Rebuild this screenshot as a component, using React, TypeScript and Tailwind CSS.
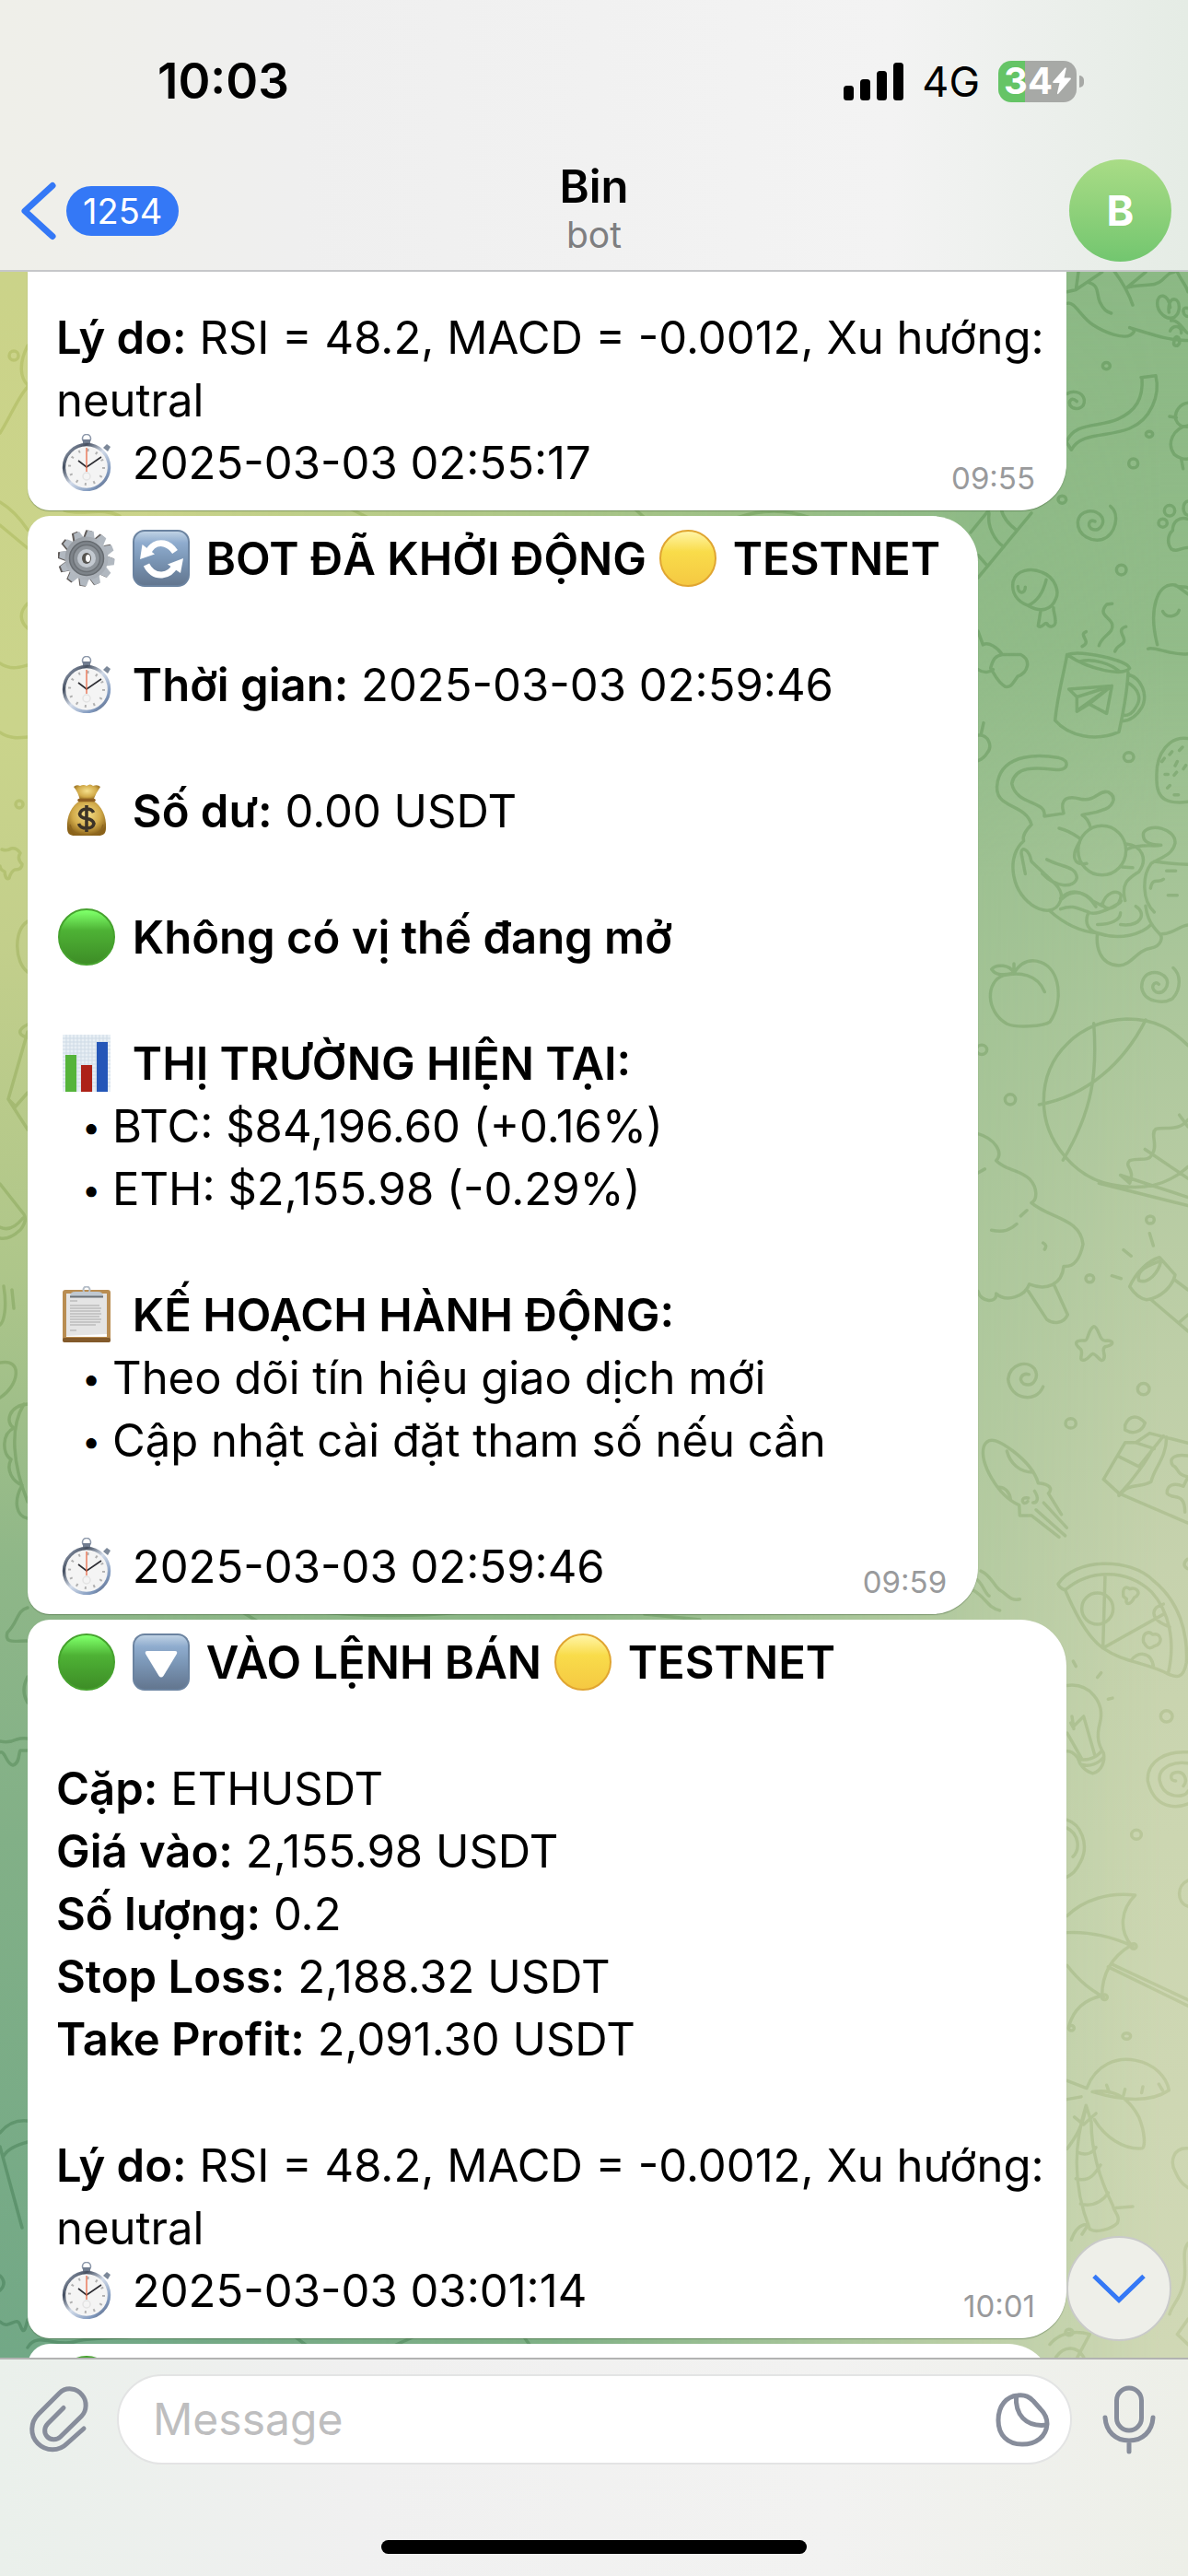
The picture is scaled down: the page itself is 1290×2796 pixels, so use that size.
import { useId, type ReactNode } from "react";

/* ---------- Emoji ---------- */

const EMOJI = "inline-block size-[62px] ml-[2px] mr-[5px] align-[-13px]";

function Ball({ tone }: { tone: "green" | "yellow" }) {
  const id = useId();
  const c =
    tone === "green"
      ? { a: "#7dff68", b: "#4eb235", d: "#3d8c26", e: "#46a22e" }
      : { a: "#fff3a0", b: "#f9dc4a", d: "#f5c842", e: "#e0a531" };
  return (
    <svg className={EMOJI} viewBox="0 0 62 62" role="img" aria-label={tone + " circle"}>
      <defs>
        <linearGradient id={id} x1="0" y1="0" x2="0" y2="1">
          <stop offset="0.04" stopColor={c.a} />
          <stop offset="0.38" stopColor={c.b} />
          <stop offset="1" stopColor={c.d} />
        </linearGradient>
      </defs>
      <circle cx="31" cy="31" r="30" fill={"url(#" + id + ")"} stroke={c.e} strokeWidth="2" />
    </svg>
  );
}

function Tile({ label, children }: { label: string; children?: ReactNode }) {
  const id = useId();
  return (
    <svg className={EMOJI} viewBox="0 0 62 62" role="img" aria-label={label}>
      <defs>
        <linearGradient id={id} x1="0" y1="0" x2="0" y2="1">
          <stop offset="0" stopColor="#c3d5e6" />
          <stop offset="0.22" stopColor="#8facce" />
          <stop offset="0.5" stopColor="#7c98b8" />
          <stop offset="1" stopColor="#62758e" />
        </linearGradient>
      </defs>
      <rect x="1" y="1" width="60" height="60" rx="12" fill={"url(#" + id + ")"} stroke="#6b83a0" strokeWidth="2" />
      {children}
    </svg>
  );
}

function Refresh() {
  return (
    <Tile label="refresh">
      <path d="M16 26C20 17 27 13.500 34 15C39 16 43 19.500 46 24" fill="none" stroke="#fff" strokeWidth="7" />
      <path d="M8 32L10.500 16L24 26.500Z" fill="#fff" />
      <path d="M15 38C19 46 25 49.500 32 49C38 48.500 43 45 46 39" fill="none" stroke="#fff" strokeWidth="7" />
      <path d="M55 31L52 47L38 37.500Z" fill="#fff" />
    </Tile>
  );
}

function Down() {
  return (
    <Tile label="down">
      <path d="M16 19H46Q49 19 48 22L33.500 46Q31 49 28.500 46L14 22Q13 19 16 19Z" fill="#fff" />
    </Tile>
  );
}

function Stopwatch() {
  const id = useId();
  return (
    <svg className={EMOJI} viewBox="0 0 62 62" role="img" aria-label="stopwatch">
      <defs>
        <linearGradient id={id} x1="0" y1="0" x2="1" y2="1">
          <stop offset="0" stopColor="#aeb9cc" />
          <stop offset="0.25" stopColor="#454f60" />
          <stop offset="0.5" stopColor="#d3dcea" />
          <stop offset="0.8" stopColor="#7f98bd" />
          <stop offset="1" stopColor="#4f566b" />
        </linearGradient>
      </defs>
      <circle cx="31" cy="5" r="4.500" fill="none" stroke="#8d98aa" strokeWidth="1.600" />
      <path d="M27 6h8v6h-8z" fill="#717d90" />
      <path d="M49 15l4-4 4 3-3 5z" fill="#7c8899" />
      <circle cx="31" cy="36" r="24.500" fill="#f4f4f4" stroke={"url(#" + id + ")"} strokeWidth="3.400" />
      <circle cx="31" cy="36" r="18.500" fill="none" stroke="#b0b0b0" strokeWidth="3" strokeDasharray="2 7.700" />
      <circle cx="31" cy="46" r="4" fill="none" stroke="#e3e3e3" strokeWidth="1.500" />
      <path d="M22 29L31 36L47 25" fill="none" stroke="#2d2d33" strokeWidth="1.600" />
      <path d="M31 15V41" stroke="#ea6a48" strokeWidth="1.300" />
    </svg>
  );
}

function Gear() {
  const id = useId();
  const teeth = Array.from({ length: 12 }, (_, i) => i * 30 + 8);
  return (
    <svg className={EMOJI} viewBox="0 0 62 62" role="img" aria-label="gear">
      <defs>
        <linearGradient id={id} x1="0" y1="0" x2="1" y2="1">
          <stop offset="0" stopColor="#8a8f95" />
          <stop offset="0.5" stopColor="#b4bac1" />
          <stop offset="1" stopColor="#a2a8b0" />
        </linearGradient>
      </defs>
      {teeth.map((a) => (
        <path key={"s" + a} d="M24 10L26 0.500H32.500L35 10Z" fill="#5f5a58" transform={"rotate(" + a + " 30 31)"} />
      ))}
      {teeth.map((a) => (
        <path key={a} d="M26 10L28 1H34.500L37 10Z" fill="#b1b8c0" transform={"rotate(" + a + " 31.500 31)"} />
      ))}
      <circle cx="31" cy="31" r="23.500" fill={"url(#" + id + ")"} />
      <circle cx="31" cy="31" r="18.500" fill="#7d8389" stroke="#666b70" strokeWidth="1.500" />
      <circle cx="31" cy="31" r="14.500" fill="#8f959b" stroke="#6b7075" strokeWidth="1.500" />
      <circle cx="31" cy="31" r="10" fill="#c3c9d0" />
      <ellipse cx="31" cy="31" rx="5" ry="6" fill="#55534f" />
      <ellipse cx="32.500" cy="31" rx="2.500" ry="4" fill="#fff" />
    </svg>
  );
}

function MoneyBag() {
  const id = useId();
  return (
    <svg className={EMOJI} viewBox="0 0 62 62" role="img" aria-label="money bag">
      <defs>
        <radialGradient id={id} cx="0.5" cy="0.4" r="0.6">
          <stop offset="0" stopColor="#f6e08b" />
          <stop offset="0.6" stopColor="#d2ab4a" />
          <stop offset="1" stopColor="#8a6219" />
        </radialGradient>
      </defs>
      <path d="M17 5Q20 2 24 4Q28 2 31 4Q35 1 38 4Q43 2 46 5Q41 12 38 20H24Q22 11 17 5Z" fill={"url(#" + id + ")"} />
      <path d="M24 20H38C47 25 53 37 52 50C52 56 49 58 44 58H18C13 58 10 56 10 50C9 37 15 25 24 20Z" fill={"url(#" + id + ")"} />
      <path d="M13 46Q15 56 24 57M49 46Q47 56 38 57" fill="none" stroke="#8d6620" strokeWidth="1.500" />
      <path d="M23 19.500H39" stroke="#8f5f20" strokeWidth="3.500" strokeLinecap="round" />
      <path d="M38.500 33Q37 29 31 29T23.500 34.500Q24 38.500 31 39.500T39 45Q38 50 31 50T22.500 45M31 25V54" fill="none" stroke="#3c3327" strokeWidth="3.600" />
    </svg>
  );
}

function BarChart() {
  return (
    <svg className={EMOJI} viewBox="0 0 62 62" role="img" aria-label="bar chart">
      <rect x="5" width="52" height="62" fill="#e8eff5" />
      <path
        d="M9 0V62M13 0V62M17 0V62M21 0V62M25 0V62M29 0V62M33 0V62M37 0V62M41 0V62M45 0V62M49 0V62M53 0V62M5 4H57M5 8H57M5 12H57M5 16H57M5 20H57M5 24H57M5 28H57M5 32H57M5 36H57M5 40H57M5 44H57M5 48H57M5 52H57M5 56H57"
        stroke="#cfdbe6"
        strokeWidth="1"
      />
      <rect x="8" y="22" width="12" height="40" fill="#55b43a" />
      <rect x="25" y="33" width="12" height="29" fill="#ad2218" />
      <rect x="42" y="8" width="12" height="54" fill="#2456b8" />
    </svg>
  );
}

function Clipboard() {
  return (
    <svg className={EMOJI} viewBox="0 0 62 62" role="img" aria-label="clipboard">
      <rect x="5" y="4" width="52" height="57" rx="3" fill="#b98d52" />
      <rect x="5" y="56" width="52" height="5" rx="2" fill="#835a2b" />
      <rect x="9" y="8" width="44" height="47" fill="#e4e4e4" />
      <path d="M13 16h8M13 21H45M13 24H47M13 27H46M13 30H47M13 33H45M13 36H47M13 39H46M13 42H41M13 48h7" stroke="#bcbcbc" strokeWidth="1.400" />
      <path d="M9 55L53 55V52L9 54Z" fill="#fff" />
      <circle cx="31" cy="4" r="3.500" fill="none" stroke="#b4bdc7" strokeWidth="2" />
      <path d="M13 11Q13 6 19 6H43Q49 6 49 11Z" fill="#bfc8d1" />
      <path d="M13 11.500H49" stroke="#6b7178" strokeWidth="2" />
    </svg>
  );
}

/* ---------- Chat wallpaper ---------- */

function Doodles() {
  return (
    <svg
      className="absolute inset-0 size-full opacity-40 mix-blend-soft-light"
      viewBox="0 295 1290 2264"
      preserveAspectRatio="xMaxYMin slice"
      aria-hidden="true"
    >
      <g fill="none" stroke="#000" strokeWidth="3.500" strokeLinecap="round" strokeLinejoin="round">
        <g transform="translate(1040 290) scale(0.33333 0.44643)">
          <g>
            <path vectorEffect="non-scaling-stroke" d="M356 88C380 82 400 120 440 140S540 175 562 165S572 150 560 147C620 160 690 180 750 178M510 10C540 40 560 70 570 92M423 36C465 45 450 65 463 85S485 108 500 112M356 60L385 55L470 12M385 55L393 12M550 50L612 12M550 50C600 38 640 50 665 32S690 14 705 12M715 12C730 35 745 45 750 60" />
            <path vectorEffect="non-scaling-stroke" d="M688 110C685 95 690 78 705 78C725 80 728 110 705 122C680 130 650 110 650 88C650 60 688 65 692 98M750 100C725 95 735 120 750 120M695 130C720 125 740 160 750 160M692 155C700 140 730 140 728 160M705 180C705 165 725 165 722 185C715 195 700 192 705 180" />
            <path vectorEffect="non-scaling-stroke" d="M597 268L645 264C660 310 630 370 560 392S400 400 370 444L354 425C380 375 460 390 520 370S605 320 600 268M388 326C370 315 360 325 366 336C380 350 415 345 412 322C405 300 370 300 356 308" />
            <ellipse vectorEffect="non-scaling-stroke" cx="484" cy="240" rx="12" ry="8" />
            <ellipse vectorEffect="non-scaling-stroke" cx="624" cy="406" rx="11" ry="7" />
            <ellipse vectorEffect="non-scaling-stroke" cx="572" cy="477" rx="15" ry="11" />
            <ellipse vectorEffect="non-scaling-stroke" cx="340" cy="565" rx="13" ry="9" />
            <ellipse vectorEffect="non-scaling-stroke" cx="533" cy="736" rx="16" ry="12" />
            <ellipse vectorEffect="non-scaling-stroke" cx="557" cy="1191" rx="16" ry="11" />
            <path vectorEffect="non-scaling-stroke" d="M750 330C725 332 705 350 710 370C720 390 740 388 750 388M750 385C700 390 680 430 705 455C720 465 740 468 750 466M690 363L712 366M728 466L734 490" />
            <path vectorEffect="non-scaling-stroke" d="M447 618C430 612 420 625 435 636C460 645 480 625 470 608C450 585 395 588 391 620C390 655 440 668 470 662C515 652 530 600 497 581" />
            <path vectorEffect="non-scaling-stroke" d="M750 612C720 605 700 620 700 640C685 650 680 670 695 685C715 695 730 680 750 682" />
            <ellipse vectorEffect="non-scaling-stroke" cx="690" cy="592" rx="17" ry="13" />
            <ellipse vectorEffect="non-scaling-stroke" cx="668" cy="622" rx="14" ry="10" />
            <ellipse vectorEffect="non-scaling-stroke" cx="750" cy="586" rx="15" ry="17" />
            <path vectorEffect="non-scaling-stroke" d="M42 645L102 590M66 755L240 598M102 598C95 630 120 665 150 680M142 590C150 615 175 630 192 640M66 700L95 725" />
            <path vectorEffect="non-scaling-stroke" d="M180 765C190 735 240 730 275 742C320 755 330 790 320 805C305 835 270 840 230 823C190 812 175 790 180 765M288 760C280 785 265 810 230 822M196 776C195 795 220 795 220 778M270 835L262 872C275 880 282 862 290 866C300 880 320 872 318 860C318 845 310 835 312 828" />
            <path vectorEffect="non-scaling-stroke" d="M405 922C440 910 390 895 418 886M460 920C470 895 510 890 503 868C495 850 455 845 485 820L503 818M512 934C520 915 550 920 540 900C530 885 528 878 548 874" />
            <path vectorEffect="non-scaling-stroke" d="M356 942C400 930 550 955 560 975C540 995 430 980 356 942C345 990 325 1040 317 1102C360 1140 450 1155 525 1130C540 1080 552 1030 555 985M555 990C600 1000 620 1040 600 1070C580 1095 560 1103 535 1104M553 1010C590 1025 600 1050 580 1070C570 1085 555 1090 540 1090M400 958C440 950 500 965 525 982M362 1026L502 1018L485 1085L428 1062L388 1080V1045L362 1026M388 1045L502 1018L390 1077M428 1062L502 1018" />
            <path vectorEffect="non-scaling-stroke" d="M66 885L82 918C100 910 130 925 145 942H205C240 955 230 985 195 995C180 1010 175 1022 155 1020C130 1010 120 990 107 975C115 950 125 945 145 942M66 978C85 988 105 985 115 978M66 1138C100 1135 115 1165 95 1182C85 1195 72 1198 66 1200M84 1108L75 1138" />
            <path vectorEffect="non-scaling-stroke" d="M620 928C640 920 690 945 750 940M650 918C620 830 650 765 710 773L750 795M708 774C730 780 745 775 750 780M668 837C680 855 715 850 721 834M750 1146C690 1140 645 1180 648 1240C645 1300 690 1305 750 1300M665 1202l8-8M690 1185l8-7M722 1175l10-8M708 1212l7-10M735 1220l8-9M675 1233h10M705 1235l8-7M683 1266l8-6M705 1283h14" />
            <path vectorEffect="non-scaling-stroke" d="M240 1355C220 1300 110 1320 130 1250C150 1180 270 1185 330 1193C365 1200 360 1220 330 1222C280 1220 190 1205 176 1255C190 1310 290 1295 282 1335L345 1328C330 1290 360 1285 400 1293C450 1300 460 1270 490 1276C525 1290 500 1315 470 1320C440 1330 420 1328 405 1332C425 1340 430 1355 433 1364M330 1364C365 1370 380 1380 400 1390M240 1355C220 1370 210 1385 215 1395C160 1430 170 1510 240 1550C280 1570 320 1570 335 1540C350 1510 300 1490 240 1445C230 1410 205 1410 207 1425L220 1475M275 1474C320 1510 380 1510 388 1485C385 1455 340 1460 290 1440" />
            <ellipse vectorEffect="non-scaling-stroke" cx="470" cy="1418" rx="78" ry="60" />
            <path vectorEffect="non-scaling-stroke" d="M395 1400C370 1430 375 1455 420 1450M548 1402C600 1405 620 1440 590 1470C560 1485 530 1495 545 1540M535 1458L570 1460M552 1415C600 1400 640 1410 662 1405C620 1405 600 1395 605 1375C625 1350 710 1365 708 1400C700 1430 660 1435 630 1450C600 1480 600 1540 640 1568M640 1445C690 1450 720 1452 750 1452M628 1510C635 1480 655 1500 670 1488M680 1468h30M685 1527h30M335 1535C380 1500 430 1530 450 1555" />
          </g>
        </g>
        <g transform="translate(1040 950) scale(0.33333 0.5102)">
          <path vectorEffect="non-scaling-stroke" d="M300 76C350 105 400 120 455 123C530 140 600 125 630 105M340 50C380 25 420 40 440 55L470 65C480 35 520 30 532 42C530 70 480 80 470 60M335 72C380 60 400 75 425 78C450 90 530 60 532 55M425 80C410 105 430 118 455 123C450 150 460 190 525 192C570 190 580 160 630 155C665 150 670 130 655 123C620 100 615 80 612 65M530 105C600 110 615 80 580 66M665 125C700 125 720 108 750 106M455 105C500 105 530 95 530 80" />
          <path vectorEffect="non-scaling-stroke" d="M183 208C170 190 125 188 110 200C125 215 150 212 183 208V188M183 208C210 180 240 178 270 185C335 200 345 270 300 312C280 322 190 325 160 316C90 290 90 225 150 213C200 205 260 210 283 248" />
          <path vectorEffect="non-scaling-stroke" d="M655 232C640 222 625 240 645 248C670 255 690 235 680 220C660 200 600 200 599 238C605 270 670 275 700 262C730 240 725 210 702 197" />
          <path vectorEffect="non-scaling-stroke" d="M750 362C700 330 650 306 550 306C400 310 280 380 280 480C280 570 390 645 500 658C620 675 700 650 750 620M443 315C455 420 440 500 343 606M612 308C540 400 420 470 265 488M460 655L750 703M530 638L750 685M530 638L560 655C580 625 540 620 560 607C590 600 620 610 632 595C655 575 625 550 645 540C680 535 720 545 750 520M610 583L750 645M722 510L750 535" />
          <ellipse vectorEffect="non-scaling-stroke" cx="78" cy="371" rx="17" ry="10" />
          <ellipse vectorEffect="non-scaling-stroke" cx="171" cy="477" rx="17" ry="11" />
          <ellipse vectorEffect="non-scaling-stroke" cx="627" cy="733" rx="13" ry="8" />
          <ellipse vectorEffect="non-scaling-stroke" cx="430" cy="858" rx="13" ry="8" />
          <ellipse vectorEffect="non-scaling-stroke" cx="605" cy="1093" rx="19" ry="12" />
          <ellipse vectorEffect="non-scaling-stroke" cx="368" cy="1166" rx="17" ry="10" />
          <path vectorEffect="non-scaling-stroke" d="M66 550C120 560 150 590 125 607C160 630 200 625 235 647C260 665 260 690 240 697C300 730 400 730 408 785C400 810 385 835 345 832C340 870 290 885 233 870C220 895 160 910 125 890C130 910 75 910 66 885M110 755C150 760 170 755 192 742M66 633l22-8M205 725l20-12M278 782q15 5 5 14M230 885L290 945C310 955 345 955 358 935L315 873" />
          <path vectorEffect="non-scaling-stroke" d="M625 762L637 788M540 797L565 810M502 852L532 858M560 875C580 845 620 820 657 813L708 850C700 875 660 900 615 903C590 900 570 885 560 875ZM590 862C580 840 620 830 662 820C655 845 620 870 590 862M705 860L750 882M630 903L750 970M720 952L750 935" />
          <path vectorEffect="non-scaling-stroke" d="M443 960C425 965 425 990 415 990C385 988 375 995 400 1008C410 1015 395 1030 405 1031C420 1035 430 1020 440 1018C455 1020 465 1038 475 1030C485 1020 465 1010 480 1003C510 1000 510 990 485 990C460 995 460 960 443 960Z" />
          <path vectorEffect="non-scaling-stroke" d="M232 1062C210 1058 195 1072 215 1082C250 1090 265 1065 250 1050C225 1030 170 1040 164 1072C170 1115 255 1125 278 1088" />
          <path vectorEffect="non-scaling-stroke" d="M200 1340C130 1320 70 1250 85 1215C100 1190 140 1205 180 1225C220 1245 250 1265 262 1293C300 1295 310 1305 295 1315L338 1360M200 1340L202 1362H240L330 1408M280 1335L355 1388M255 1350L350 1405M160 1225C170 1250 200 1270 245 1270M130 1302C155 1300 170 1315 172 1328M230 1325C200 1320 210 1345 228 1332M245 1335C260 1335 265 1325 250 1310" />
          <path vectorEffect="non-scaling-stroke" d="M545 1170C560 1145 590 1150 610 1165C600 1185 570 1190 545 1180ZM475 1285L545 1207H580L625 1187L750 1208M475 1285L525 1315L750 1378M520 1235L590 1258L670 1193M525 1318C580 1280 620 1240 635 1220M525 1320C560 1290 590 1305 630 1290C640 1260 680 1240 680 1195M580 1207L640 1220M750 1235C710 1230 685 1240 700 1255C720 1260 710 1275 750 1280L735 1300C700 1290 680 1300 682 1315C700 1330 740 1310 740 1355" />
          <path vectorEffect="non-scaling-stroke" d="M75 1480C110 1490 120 1515 140 1522S170 1545 202 1540M60 1497C80 1505 90 1530 102 1533M48 1520C90 1535 100 1560 137 1564M748 1455q-20 12 0 20" />
        </g>
        <g transform="translate(1040 1700) scale(0.33333 0.54845)">
          <path vectorEffect="non-scaling-stroke" d="M327 35C380 -15 560 -20 640 30C720 70 750 130 745 190C735 225 710 220 685 213C610 190 540 190 473 162C420 140 380 90 350 47C340 45 330 42 327 35ZM350 47C430 5 550 5 630 50C690 90 710 150 685 213M480 18L473 162L670 95M670 75C630 80 620 105 690 120M565 187C580 170 630 165 638 200M540 60C535 40 550 40 560 45C585 40 600 55 575 62C560 80 545 75 550 65ZM605 150C600 130 625 128 635 135C665 130 670 155 640 158C620 168 610 155 605 150Z" />
          <ellipse vectorEffect="non-scaling-stroke" cx="455" cy="84" rx="51" ry="31" />
          <ellipse vectorEffect="non-scaling-stroke" cx="680" cy="297" rx="19" ry="11" />
          <ellipse vectorEffect="non-scaling-stroke" cx="582" cy="531" rx="16" ry="9" />
          <ellipse vectorEffect="non-scaling-stroke" cx="550" cy="930" rx="13" ry="6" />
          <ellipse vectorEffect="non-scaling-stroke" cx="363" cy="1516" rx="12" ry="6" />
          <path vectorEffect="non-scaling-stroke" d="M376 188l9 10M455 220l12-9M490 263l14-2M356 236C430 230 480 270 463 310C450 340 460 355 475 370C480 385 470 405 440 410C410 405 395 390 392 380C380 370 365 365 356 366M356 330L405 382M368 310L375 318L410 297L447 375M392 382C420 385 450 380 470 365M400 392C430 398 460 390 475 378M372 297L378 322" />
          <path vectorEffect="non-scaling-stroke" d="M750 368C680 365 615 385 619 425C640 480 710 480 750 470M750 390C700 385 650 400 658 425C670 460 740 460 750 445M710 425C690 425 690 410 710 408C740 405 750 425 735 435M356 502C400 510 430 550 400 585C385 605 370 610 356 615M356 518C395 530 400 560 375 575M750 622C715 630 710 665 750 673" />
          <path vectorEffect="non-scaling-stroke" d="M356 692C410 660 490 645 578 651C530 680 525 720 565 750C510 770 470 800 470 850C430 855 380 870 362 910M356 725C430 722 510 735 570 752M356 790C400 825 440 840 475 853M490 793L750 870M500 787L750 858" />
          <ellipse vectorEffect="non-scaling-stroke" cx="573" cy="752" rx="9" ry="5" />
          <ellipse vectorEffect="non-scaling-stroke" cx="478" cy="853" rx="9" ry="5" />
          <ellipse vectorEffect="non-scaling-stroke" cx="370" cy="914" rx="9" ry="5" />
          <path vectorEffect="non-scaling-stroke" d="M356 1018L420 1033C450 985 520 970 580 978C640 985 680 1010 688 1037C620 1065 520 1055 438 1040C500 1035 550 1045 590 1090C610 1120 612 1150 600 1152C540 1155 480 1130 445 1095M402 1050L356 1055M356 1153C385 1130 410 1105 418 1067C380 1140 370 1220 430 1312C450 1320 500 1312 520 1300C530 1285 510 1280 505 1265C460 1210 435 1150 435 1100L418 1067M380 1090L410 1105L450 1083M485 1027l8 14M545 1035l-5 12M603 1030l-4 12M655 1025l12 12M390 1160C420 1168 440 1160 450 1150M385 1212C430 1220 450 1200 465 1185M400 1262C450 1270 480 1250 490 1240M515 1270L570 1267M370 1333C380 1315 400 1300 425 1303M405 1322L425 1303M750 1152C700 1150 690 1180 710 1200C725 1222 740 1225 750 1230M750 1340C725 1360 750 1390 735 1420C725 1450 700 1460 690 1480M750 1490L715 1520L750 1540M300 1540C340 1510 400 1515 430 1520L390 1565M320 1565C350 1540 390 1545 410 1565" />
        </g>
        <path d="M30 375C20 395 22 410 30 418M0 470C10 455 20 430 30 420M0 545C12 552 20 560 30 575M0 720C12 728 22 724 30 722M30 655C20 665 22 675 30 682M0 795C10 802 20 801 30 800M0 570L30 595" />
        <circle cx="15" cy="386" r="5" />
        <circle cx="21" cy="873" r="4" />
        <path d="M2 922Q8 924 12 921Q18 920 22 926Q18 932 24 938Q24 944 16 944Q12 946 10 953Q6 956 5 946Q0 944 0 940M30 1000C14 1010 16 1045 30 1055M30 1112C18 1118 20 1124 30 1126M30 1120L9 1193L30 1226M16 1202L30 1186M9 1193L16 1200M0 1285L26 1318Q30 1325 22 1335Q10 1346 0 1344M0 1332Q12 1338 25 1322M4 1396C8 1420 4 1435 0 1438M13 1400L15 1420" />
        <path d="M0 1479C26 1474 20 1505 0 1517M30 1524C8 1526 6 1545 15 1550C2 1556 2 1578 12 1584C6 1596 14 1608 24 1612C14 1630 18 1646 30 1648M26 1524C10 1550 14 1590 30 1630M30 1745C18 1748 20 1760 8 1772C4 1786 20 1780 30 1781M0 1890Q10 1892 18 1888Q24 1886 30 1887M0 1902C6 1900 6 1914 14 1916C22 1914 20 1902 22 1900H30M30 1820Q22 1835 30 1848" />
        <path d="M0 2315Q12 2300 30 2302M0 2330L24 2418M30 2325Q10 2330 4 2340M0 2470Q8 2478 0 2486M0 2520C10 2530 18 2512 22 2524S28 2526 30 2518M30 2548C40 2530 60 2548 80 2542S130 2538 146 2536M320 2536L350 2559M430 2545L450 2536M570 2538L585 2559M70 554C90 560 110 550 130 560M380 552L400 562M690 553L700 562M800 562Q840 548 880 562M260 1748L280 1760M330 1748Q420 1758 500 1750M700 1752L760 1758" />
      </g>
    </svg>
  );
}

function Wallpaper() {
  return (
    <div className="absolute inset-0 isolate bg-[linear-gradient(to_bottom,#cbd389_0%,#cad48b_22%,#c3cf8b_32%,#aec68a_48%,#8fb788_62%,#82b087_75%,#72a886_100%)]">
      <div className="absolute inset-0 bg-[#8cb985] [mask-image:linear-gradient(to_right,transparent_12%,black_82%)]" />
      <div className="absolute inset-0 bg-[linear-gradient(to_bottom,#8cb98500_0%,#98be8d80_18%,#a5c497_29%,#b6cba2_43%,#c6d2ad_62%,#ccd6b1_75%,#d0d8b5_100%)] [mask-image:linear-gradient(to_right,transparent_46%,black_98%)]" />
      <Doodles />
    </div>
  );
}

/* ---------- Messages ---------- */

function Line({ children }: { children: ReactNode }) {
  return <p className="leading-[68px]">{children}</p>;
}

function Blank() {
  return <div className="h-[69px]" />;
}

function Bullet({ children }: { children: ReactNode }) {
  return (
    <li className="flex gap-3.5 pl-7 leading-[68px]">
      <span className="w-[19px] text-center text-4xl leading-[68px]">•</span>
      <span>{children}</span>
    </li>
  );
}

function LastLine({ stamp, time }: { stamp: string; time: string }) {
  return (
    <div className="flex h-[68px] items-end justify-between gap-8 pr-3.5">
      <Line>
        <Stopwatch /> {stamp}
      </Line>
      <time className="text-[33px] leading-9 text-[#999a9c]">{time}</time>
    </div>
  );
}

const BUBBLE =
  "w-fit bg-white pr-5 pb-[17px] pl-[31px] shadow-[0_1px_1px_rgba(60,90,50,0.45)]";

function Reason() {
  return (
    <Line>
      <b className="font-semibold">Lý do:</b> RSI = 48.2, MACD = -0.0012, Xu hướng:{" "}
      <span className="block">neutral</span>
    </Line>
  );
}

function Field({ name, value }: { name: string; value: string }) {
  return (
    <Line>
      <b className="font-semibold">{name}:</b> {value}
    </Line>
  );
}

function Messages() {
  return (
    <div className="relative flex flex-col items-start gap-1.5 pr-[132px] pl-[30px] text-[49px] text-black">
      <article className={BUBBLE + " self-stretch rounded-br-[50px] rounded-bl-[24px] pt-[38px] min-w-full"}>
        <Reason />
        <LastLine stamp="2025-03-03 02:55:17" time="09:55" />
      </article>

      <article className={BUBBLE + " rounded-l-[24px] rounded-r-[50px] pt-[13px]"}>
        <h2 className="pr-[21px] leading-[68px] font-semibold">
          <Gear /> <Refresh /> BOT ĐÃ KHỞI ĐỘNG <Ball tone="yellow" /> TESTNET
        </h2>
        <Blank />
        <Line>
          <Stopwatch /> <b className="font-semibold">Thời gian:</b> 2025-03-03 02:59:46
        </Line>
        <Blank />
        <Line>
          <MoneyBag /> <b className="font-semibold">Số dư:</b> 0.00 USDT
        </Line>
        <Blank />
        <Line>
          <Ball tone="green" /> <b className="font-semibold">Không có vị thế đang mở</b>
        </Line>
        <Blank />
        <Line>
          <BarChart /> <b className="font-semibold">THỊ TRƯỜNG HIỆN TẠI:</b>
        </Line>
        <ul>
          <Bullet>BTC: $84,196.60 (+0.16%)</Bullet>
          <Bullet>ETH: $2,155.98 (-0.29%)</Bullet>
        </ul>
        <Blank />
        <Line>
          <Clipboard /> <b className="font-semibold">KẾ HOẠCH HÀNH ĐỘNG:</b>
        </Line>
        <ul>
          <Bullet>Theo dõi tín hiệu giao dịch mới</Bullet>
          <Bullet>Cập nhật cài đặt tham số nếu cần</Bullet>
        </ul>
        <Blank />
        <LastLine stamp="2025-03-03 02:59:46" time="09:59" />
      </article>

      <article className={BUBBLE + " min-w-full rounded-l-[24px] rounded-r-[50px] pt-[13px]"}>
        <h2 className="leading-[68px] font-semibold">
          <Ball tone="green" /> <Down /> VÀO LỆNH BÁN <Ball tone="yellow" /> TESTNET
        </h2>
        <Blank />
        <Field name="Cặp" value="ETHUSDT" />
        <Field name="Giá vào" value="2,155.98 USDT" />
        <Field name="Số lượng" value="0.2" />
        <Field name="Stop Loss" value="2,188.32 USDT" />
        <Field name="Take Profit" value="2,091.30 USDT" />
        <Blank />
        <Reason />
        <LastLine stamp="2025-03-03 03:01:14" time="10:01" />
      </article>

      <article className="mr-3.5 flex self-stretch rounded-tl-[24px] rounded-tr-[50px] bg-white pt-[13px] pl-[31px]">
        <Ball tone="green" />
        <span className="ml-3">
          <Tile label="tile" />
        </span>
        <span className="ml-[402px]">
          <Ball tone="yellow" />
        </span>
      </article>
    </div>
  );
}

/* ---------- Bars ---------- */

function StatusBar() {
  return (
    <div className="flex h-[168px] items-center justify-between pt-2 pr-[113px] pl-[171px]">
      <span className="text-[53px] leading-none font-semibold">10:03</span>
      <div className="flex items-center gap-5">
        <svg className="h-[41px] w-[65px]" viewBox="0 0 65 41" aria-label="Signal" role="img">
          <rect y="25" width="11" height="16" rx="3.500" />
          <rect x="18" y="18" width="11" height="23" rx="3.500" />
          <rect x="36" y="9" width="11" height="32" rx="3.500" />
          <rect x="54" width="11" height="41" rx="3.500" />
        </svg>
        <span className="text-[45px] leading-none">4G</span>
        <div className="flex items-center gap-[3px]">
          <div className="flex h-[45px] w-[85px] items-center justify-center rounded-[14px] bg-[linear-gradient(to_right,#65c466_29px,#a7a9a6_29px)] text-white">
            <span className="text-[40px] leading-none font-bold">34</span>
            <svg className="h-[30px] w-5" viewBox="0 0 20 30" fill="currentColor" aria-hidden="true">
              <path d="M13.500 0.500Q15 0 14.700 1.500L12.500 11.500H19Q20.500 12 19.500 13.300L6.500 28.500Q5 30 5 28L7.500 17H1Q-0.500 16.500 0.600 15.200Z" />
            </svg>
          </div>
          <div className="h-[13px] w-[5px] rounded-r-full bg-[#a7a9a6]" />
        </div>
      </div>
    </div>
  );
}

function NavBar() {
  return (
    <div className="grid h-[125px] grid-cols-[1fr_auto_1fr] items-center px-[18px] pb-1">
      <button className="ml-1 flex items-center gap-2.5 justify-self-start text-[#3478f6]" aria-label="Back, 1254 unread">
        <svg className="h-[64px] w-10" viewBox="0 0 40 64" fill="none" stroke="currentColor" strokeWidth="7" strokeLinecap="round" strokeLinejoin="round" aria-hidden="true">
          <path d="M35 4.500L5 32L35 59.500" />
        </svg>
        <span className="flex h-[54px] items-center rounded-full bg-[#3478f6] px-[18px] text-[38px] leading-none text-white">1254</span>
      </button>
      <div className="pb-1 text-center">
        <h1 className="text-[49px] leading-[56px] font-semibold text-black">Bin</h1>
        <p className="text-[39px] leading-[48px] text-[#7e7e80]">bot</p>
      </div>
      <button className="flex size-[111px] items-center justify-center justify-self-end rounded-full bg-gradient-to-b from-[#a9dc86] to-[#72c66f] text-[45px] leading-none font-bold text-white">
        B
      </button>
    </div>
  );
}

function Composer() {
  return (
    <footer className="relative border-t-2 border-[#b2b3b2] bg-[linear-gradient(to_right,#eaf0eb,#f0f0f0_30%,#f2f2f1_70%,#edefe8)]">
      <form className="flex items-center pt-4 pr-[35px] pl-8" onSubmit={(e) => e.preventDefault()}>
        <button type="button" className="text-[#878d9b]" aria-label="Attach">
          <svg className="h-[74px] w-[64px]" viewBox="0 0 64 74" fill="none" stroke="currentColor" strokeWidth="5" strokeLinecap="round" aria-hidden="true">
            <path d="M37 24.500L20 41.500C16 45.500 15.500 51.500 19 55.500C22.500 59.500 29.500 60 33.500 56L56.500 33.500C62.500 27.500 62.500 17 57.500 11C51.500 2.500 39.500 1.500 32.500 8.500L10 31C0.500 40.500 0.500 54.500 9 63C18 72 32 72 41 63L59 47" />
          </svg>
        </button>
        <label className="ml-[31px] flex h-[98px] flex-1 items-center rounded-full border-2 border-[#e3e4e4] bg-white pr-[22px] pl-[37px]">
          <input
            type="text"
            aria-label="Message"
            placeholder="Message"
            className="min-w-0 flex-1 bg-transparent text-[48px] leading-[60px] text-black outline-none placeholder:text-[#bebebf]"
          />
          <button type="button" className="text-[#878d9b]" aria-label="Stickers">
            <svg className="size-[60px]" viewBox="0 0 60 60" fill="none" stroke="currentColor" strokeWidth="5" strokeLinejoin="round" aria-hidden="true">
              <path d="M25 4C34 3 38 6 42 10L50 19C54 23 57 28 57 35C56 49 45 57 30 57C14 57 4 47 4 31C4 15 13 5 25 4Z" />
              <path d="M23.500 4C22 24 33 39 57 36" />
            </svg>
          </button>
        </label>
        <button type="button" className="ml-[33px] text-[#878d9b]" aria-label="Record voice message">
          <svg className="h-[75px] w-[58px]" viewBox="0 0 58 75" fill="none" stroke="currentColor" strokeWidth="5" strokeLinecap="round" aria-hidden="true">
            <rect x="15.500" y="3" width="27" height="46" rx="13.500" />
            <path d="M3 35C4 50 14 60 29 60S54 50 55 35M29 60V72" />
          </svg>
        </button>
      </form>
      <div className="mx-auto mt-[82px] mb-6 h-[15px] w-[462px] max-w-full rounded-full bg-black" />
    </footer>
  );
}

export default function App() {
  return (
    <div className="flex h-screen flex-col overflow-hidden font-['Inter','Noto_Sans',sans-serif] text-black">
      <header className="border-b-2 border-[#c6c7ca] bg-[linear-gradient(to_right,#efefe9,#efefef_25%,#f3f3f3_75%,#e5ece5)]">
        <StatusBar />
        <NavBar />
      </header>
      <main className="relative min-h-0 flex-1 overflow-hidden">
        <Wallpaper />
        <Messages />
        <button
          className="absolute right-[18px] bottom-[18px] flex size-[114px] items-center justify-center rounded-full border-2 border-[#c9cac9] bg-[#eeefe9] text-[#3478f6]"
          aria-label="Scroll to latest"
        >
          <svg className="h-8 w-[58px]" viewBox="0 0 58 32" fill="none" stroke="currentColor" strokeWidth="5" aria-hidden="true">
            <path d="M2 2.500L29 28.500L56 2.500" />
          </svg>
        </button>
      </main>
      <Composer />
    </div>
  );
}
